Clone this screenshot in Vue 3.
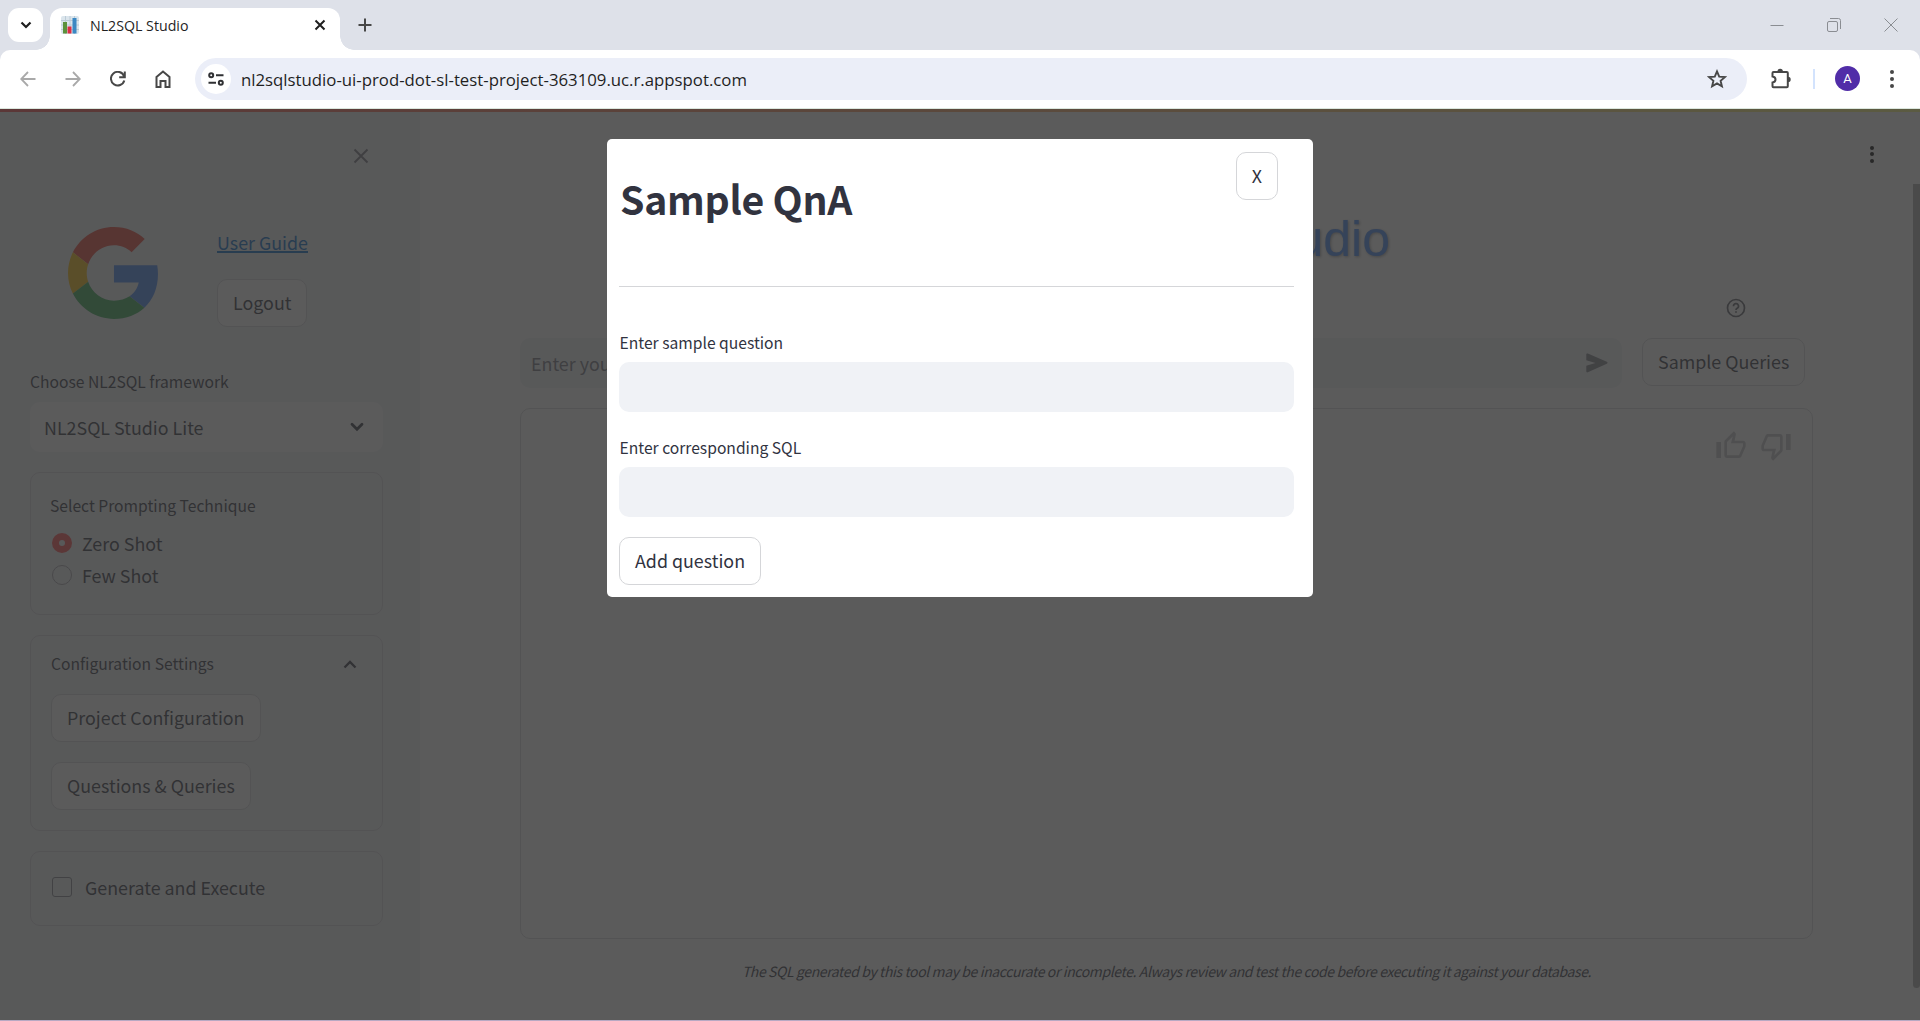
<script setup>
const menuDots = [0, 1, 2]
const configButtons = ['Project Configuration', 'Questions & Queries']
const techniques = [
  { label: 'Zero Shot', checked: true },
  { label: 'Few Shot', checked: false },
]
</script>

<template>
  <div class="window">
    <header class="tabstrip">
      <div class="tab-search">
        <svg width="12" height="8" viewBox="0 0 12 8"><path d="M1.500 1.500 6 6l4.500-4.500" fill="none" stroke="#1f1f1f" stroke-width="2.200" /></svg>
      </div>
      <div class="tab">
        <svg class="favicon" width="20" height="20" viewBox="0 0 20 20">
          <rect x="1" y="1" width="18" height="18" rx="2" fill="#dbe5ec" />
          <path d="M1 5.500h18M1 10h18M1 14.500h18M5.500 1v18M10 1v18M14.500 1v18" stroke="#bccbd6" stroke-width="1" />
          <rect x="3" y="7" width="4" height="11.500" fill="#5c913b" />
          <rect x="7.500" y="11.500" width="4" height="7" fill="#dd2e44" />
          <rect x="12.500" y="3" width="4" height="15.500" fill="#3b88c3" />
        </svg>
        <span class="tab-title">NL2SQL Studio</span>
        <svg width="12" height="12" viewBox="0 0 12 12"><path d="m1.500 1.500 9 9m0-9-9 9" stroke="#1f1f1f" stroke-width="2" /></svg>
      </div>
      <svg class="plus" width="14" height="14" viewBox="0 0 14 14"><path d="M7 .5v13M.5 7h13" stroke="#474747" stroke-width="2" /></svg>
      <div class="window-controls">
        <svg width="14" height="14" viewBox="0 0 14 14"><path d="M.5 7.500h13" stroke="#8a8d92" /></svg>
        <svg width="14" height="14" viewBox="0 0 14 14" fill="none" stroke="#8a8d92"><rect x=".5" y="3.500" width="10" height="10" rx="1.500" /><path d="M3 .5h8.500a2 2 0 0 1 2 2V11" /></svg>
        <svg width="14" height="14" viewBox="0 0 14 14"><path d="m.5.5 13 13m0-13-13 13" stroke="#8a8d92" /></svg>
      </div>
    </header>

    <nav class="toolbar">
      <svg class="nav-icon" width="16" height="16" viewBox="0 0 16 16" fill="none" stroke="#a9a9a9" stroke-width="1.800"><path d="M15.500 8H1.500M8 1 1.200 8 8 15" /></svg>
      <svg class="nav-icon" width="16" height="16" viewBox="0 0 16 16" fill="none" stroke="#a9a9a9" stroke-width="1.800"><path d="M.5 8h14M8 1l6.800 7L8 15" /></svg>
      <svg class="nav-icon" width="16" height="16" viewBox="0 0 16 16" fill="none" stroke="#474747" stroke-width="2"><path d="M14.300 9.500A6.800 6.800 0 1 1 14 5M14.800.5v5.700H9.200" /></svg>
      <svg class="nav-icon" width="16" height="18" viewBox="0 0 16 18" fill="none" stroke="#474747" stroke-width="2"><path d="M1.500 7 8 1.500 14.500 7v10H10.500v-6h-5v6h-4z" /></svg>
      <div class="omnibox">
        <div class="site-info">
          <svg width="16" height="14" viewBox="0 0 16 14" fill="none" stroke="#2f3033" stroke-width="2"><circle cx="3.200" cy="3.200" r="2" /><path d="M8 3.200h7.500M.5 10.800H8" /><circle cx="12.800" cy="10.800" r="2" /></svg>
        </div>
        <span class="url">nl2sqlstudio-ui-prod-dot-sl-test-project-363109.uc.r.appspot.com</span>
        <svg width="20" height="20" viewBox="0 0 20 20" fill="none" stroke="#474747" stroke-width="1.900"><path d="m10 2.400 2.200 5.200 5.700.5-4.300 3.700 1.300 5.500-4.900-2.900-4.900 2.900 1.300-5.500L2.100 8.100l5.700-.5z" /></svg>
      </div>
      <svg class="puzzle" width="22" height="22" viewBox="0 0 22 22"><path d="M3.500 4h13.300a1 1 0 0 1 1 1v13.300a1 1 0 0 1-1 1H3.500a1 1 0 0 1-1-1v-3.800c4-.6 4-5.400 0-6V5a1 1 0 0 1 1-1z" fill="none" stroke="#474747" stroke-width="2" /><path d="M7.500 3.500a2.700 2.700 0 0 1 5.400 0zM18 8.700a2.700 2.700 0 0 1 0 5.400z" fill="#474747" /></svg>
      <i class="toolbar-divider"></i>
      <span class="avatar">A</span>
      <span class="dots chrome-dots"><i v-for="d in menuDots" :key="d"></i></span>
    </nav>

    <main class="page">
      <aside class="sidebar">
        <svg class="collapse" width="16" height="16" viewBox="0 0 16 16"><path d="m1.500 1.500 13 13m0-13-13 13" stroke="#31333f" stroke-opacity=".65" stroke-width="1.900" /></svg>
        <div class="account">
          <svg width="90" height="92" viewBox="0 0 47 48">
            <path fill="#EA4335" d="M24 9.500c3.540 0 6.710 1.220 9.210 3.600l6.850-6.850C35.900 2.380 30.470 0 24 0 14.620 0 6.510 5.380 2.560 13.220l7.980 6.190C12.430 13.720 17.740 9.500 24 9.500z" />
            <path fill="#4285F4" d="M46.980 24.550c0-1.570-.15-3.090-.38-4.550H24v9.020h12.940c-.58 2.960-2.260 5.480-4.780 7.180l7.730 6c4.510-4.180 7.090-10.360 7.090-17.650z" />
            <path fill="#FBBC05" d="M10.530 28.590c-.48-1.450-.76-2.990-.76-4.590s.27-3.140.76-4.590l-7.980-6.190C.92 16.460 0 20.120 0 24c0 3.880.92 7.540 2.560 10.780l7.970-6.190z" />
            <path fill="#34A853" d="M24 48c6.480 0 11.930-2.130 15.890-5.810l-7.730-6c-2.150 1.450-4.920 2.300-8.160 2.300-6.260 0-11.570-4.220-13.470-9.910l-7.980 6.190C6.510 42.620 14.620 48 24 48z" />
          </svg>
          <div class="account-links">
            <a class="guide">User Guide</a>
            <button class="btn">Logout</button>
          </div>
        </div>

        <label class="label framework-label">Choose NL2SQL framework</label>
        <div class="select">
          <span>NL2SQL Studio Lite</span>
          <svg width="14" height="10" viewBox="0 0 14 10"><path d="m2 2.200 5 5 5-5" fill="none" stroke="#31333f" stroke-width="2.800" stroke-linecap="round" /></svg>
        </div>

        <section class="card technique">
          <label class="label">Select Prompting Technique</label>
          <div v-for="item in techniques" :key="item.label" class="radio">
            <i :class="{ checked: item.checked }"></i><span>{{ item.label }}</span>
          </div>
        </section>

        <section class="card config">
          <div class="config-head">
            <span class="label">Configuration Settings</span>
            <svg width="14" height="9" viewBox="0 0 14 9"><path d="m1.500 7.500 5.500-5.500 5.500 5.500" fill="none" stroke="#31333f" stroke-width="2.300" /></svg>
          </div>
          <button v-for="name in configButtons" :key="name" class="btn">{{ name }}</button>
        </section>

        <section class="card execute">
          <i class="checkbox"></i><span>Generate and Execute</span>
        </section>
      </aside>

      <section class="content">
        <h1 class="brand">NL2SQL Studio</h1>
        <svg class="help" width="20" height="20" viewBox="0 0 20 20" fill="none" stroke="#31333f" stroke-opacity=".8" stroke-width="1.700"><circle cx="10" cy="10" r="8.500" /><path d="M7.500 8.200a2.500 2.500 0 1 1 3.700 2.100c-.8.500-1.200.9-1.200 1.700M10 13.200v1.600" /></svg>
        <div class="ask">
          <div class="prompt">
            <span>Enter your question here</span>
            <svg width="22" height="20" viewBox="0 0 22 20"><path d="M.3 1.500C.3.500 1 .2 1.800.5l19 8.300c1 .4 1 1.500 0 1.900l-19 8.600c-.8.300-1.500 0-1.500-1v-5.600L9.500 10 .3 7.300z" fill="#31333f" fill-opacity=".6" /></svg>
          </div>
          <button class="btn">Sample Queries</button>
        </div>
        <div class="result">
          <svg width="32" height="32" viewBox="0 0 24 24"><path d="M9 21h9c.83 0 1.540-.5 1.840-1.220l3.020-7.050c.09-.23.140-.47.140-.73v-2c0-1.100-.9-2-2-2h-6.310l.95-4.570.03-.32c0-.41-.17-.79-.44-1.060L14.170 1 7.580 7.590C7.220 7.950 7 8.450 7 9v10c0 1.100.9 2 2 2zM9 9l4.340-4.340L12 10h9v2l-3 7H9V9zM1 9h3.500v12H1z" /></svg>
          <svg width="32" height="32" viewBox="0 0 24 24"><path d="M15 3H6c-.83 0-1.540.5-1.840 1.220l-3.020 7.050c-.09.23-.14.470-.14.730v2c0 1.100.9 2 2 2h6.310l-.95 4.570-.03.320c0 .41.170.79.440 1.060L9.830 23l6.590-6.590c.36-.36.580-.86.580-1.410V5c0-1.100-.9-2-2-2zm0 12-4.340 4.340L12 14H3v-2l3-7h9v10zm4.500-12H23v12h-3.500z" /></svg>
        </div>
        <p class="disclaimer">The SQL generated by this tool may be inaccurate or incomplete. Always review and test the code before executing it against your database.</p>
        <span class="dots page-dots"><i v-for="d in menuDots" :key="d"></i></span>
        <i class="scroll-thumb"></i>
      </section>

      <div class="overlay">
        <div class="modal">
          <header class="modal-head">
            <h2>Sample QnA</h2>
            <button class="btn close">X</button>
          </header>
          <hr />
          <label class="label">Enter sample question</label>
          <input class="field" />
          <label class="label">Enter corresponding SQL</label>
          <input class="field" />
          <button class="btn add">Add question</button>
        </div>
      </div>
    </main>
  </div>
</template>

<style>
body { margin: 0; overflow: hidden; }
</style>

<style scoped>
* { box-sizing: border-box; }
.window { width: 1920px; height: 1021px; display: flex; flex-direction: column; background: #dee1e9; border-bottom: 1px solid #b7a9c3; overflow: hidden; }
svg { display: block; flex: none; }

.tabstrip { height: 50px; flex: none; display: flex; padding: 8px 22px 0 8px; }
.tab-search { width: 35px; height: 34px; border-radius: 11px; background: #fff; display: flex; align-items: center; justify-content: center; }
.tab { position: relative; width: 290px; height: 42px; margin-left: 7px; padding: 0 14px 9px 10px; border-radius: 12px 12px 0 0; background: #fff; display: flex; align-items: center; }
.tab::before, .tab::after { content: ''; position: absolute; bottom: 0; width: 14px; height: 14px; }
.tab::before { left: -14px; background: radial-gradient(circle at 0 0, transparent 13.500px, #fff 14px); }
.tab::after { right: -14px; background: radial-gradient(circle at 100% 0, transparent 13.500px, #fff 14px); }
.tab-title { flex: 1; margin-left: 10px; padding-top: 1px; font: 14.200px 'Open Sans', sans-serif; color: #1f1f1f; white-space: nowrap; }
.plus { margin: 10px 0 0 18px; }
.window-controls { margin-left: auto; height: 33px; display: flex; align-items: center; gap: 43px; }

.toolbar { height: 59px; flex: none; display: flex; align-items: center; padding: 0 22px 1px 20px; background: #fff; border-radius: 10px 10px 0 0; border-bottom: 1px solid #dbe6dd; }
.nav-icon { margin-right: 29px; }
.nav-icon:nth-child(4) { margin-right: 24px; }
.omnibox { width: 1552px; height: 42px; border-radius: 21px; background: #ebeef8; display: flex; align-items: center; padding: 0 20px 0 6px; }
.site-info { width: 30px; height: 30px; border-radius: 50%; background: #fff; display: flex; align-items: center; justify-content: center; }
.url { flex: 1; margin-left: 10px; padding-top: 1px; font: 16.780px 'Open Sans', sans-serif; color: #1f1f1f; white-space: nowrap; }
.puzzle { margin-left: 23px; }
.toolbar-divider { width: 2px; height: 20px; margin-left: 21px; background: #d3e3fd; }
.avatar { width: 25px; height: 25px; margin-left: 20px; border-radius: 50%; background: #512da8; color: #fff; font: 13px/25px Roboto, sans-serif; text-align: center; }
.dots { display: flex; flex-direction: column; }
.dots i { width: 4px; height: 4px; border-radius: 50%; }
.chrome-dots { margin-left: auto; gap: 3px; margin-right: 4px; }
.chrome-dots i { background: #474747; }

.page { position: relative; flex: 1; display: flex; background: #fff; font: 17.850px/26px 'Noto Sans CJK JP', 'Noto Sans CJK SC', sans-serif; color: #31333f; white-space: nowrap; }
.page::before { content: ''; position: absolute; inset: 0 0 auto; height: 3px; background: linear-gradient(90deg, #ff4b4b, #fffd80); }
.sidebar { width: 420px; flex: none; background: #f0f2f6; padding: 39px 37px 0 30px; display: flex; flex-direction: column; }
.collapse { margin-left: 323px; }
.account { display: flex; margin: 63px 0 0 38px; }
.account-links { margin-left: 59px; display: flex; flex-direction: column; align-items: flex-start; }
.guide { color: #0068c9; border-bottom: 2px solid; line-height: 30px; height: 26px; }
.btn { height: 48px; padding: 0 15px 2px; border: 1px solid #d5d6d9; border-radius: 10px; background: #fff; color: inherit; font: inherit; }
.account-links .btn { margin-top: 26px; }
.label { display: block; font-size: 15.650px; line-height: 24px; }
.framework-label { margin-top: 43px; }
.select { height: 50px; margin-top: 8px; padding: 0 19px 0 14px; border-radius: 10px; background: #fff; display: flex; align-items: center; justify-content: space-between; }
.card { border: 1px solid #d5d6d9; border-radius: 10px; margin-top: 20px; padding: 0 20px; }
.technique { height: 143px; padding: 21px 19px 0; }
.technique .label { margin-bottom: 9px; }
.radio { display: flex; align-items: center; height: 32px; padding-left: 2px; }
.radio i { width: 20px; height: 20px; margin-right: 10px; border: 1px solid #a3a4aa; border-radius: 50%; }
.radio i.checked { border: 7px solid #ff4b4b; }
.config { height: 196px; padding-top: 16px; display: flex; flex-direction: column; align-items: flex-start; }
.config-head { width: 100%; padding-right: 5px; display: flex; align-items: center; justify-content: space-between; margin-bottom: 18px; }
.config .btn + .btn { margin-top: 20px; }
.execute { height: 75px; display: flex; align-items: center; padding: 0 20px 4px 21px; }
.checkbox { width: 20px; height: 20px; margin-right: 13px; border: 1px solid #80828a; border-radius: 3px; }

.content { flex: 1; position: relative; padding: 0 107px 0 100px; display: flex; flex-direction: column; }
.brand { align-self: flex-end; margin: 101px 423px 0 0; font: 50px/58px 'Liberation Sans', Arial, sans-serif; color: #4285f4; text-shadow: 1px 1px 3px rgba(0, 0, 0, .4); }
.help { margin: 30px 67px 0 auto; }
.ask { display: flex; align-items: flex-start; margin-top: 20px; }
.prompt { width: 1102px; height: 50px; margin-right: 20px; border-radius: 10px; background: #f0f2f6; display: flex; align-items: center; justify-content: space-between; padding: 0 14px 0 11px; color: #73757f; }
.result { height: 531px; margin-top: 20px; border: 1px solid #d5d6d9; border-radius: 10px; display: flex; justify-content: flex-end; gap: 13px; padding: 21px 20px 0 0; fill: #31333f; fill-opacity: .3; }
.disclaimer { margin: 19px 0 0; text-align: center; font-size: 14px; letter-spacing: -.39px; font-style: italic; }
.page-dots { position: absolute; right: 46px; top: 37px; gap: 2.300px; }
.page-dots i { background: #000; }
.scroll-thumb { position: absolute; right: 0; top: 75px; width: 7px; height: 804px; background: #a9a9a9; border-radius: 0 0 4px 4px; }

.overlay { position: absolute; inset: 0; background: rgba(50, 50, 50, .8); }
.modal { position: absolute; left: 607px; top: 30px; width: 706px; height: 458px; padding: 13px 19px 12px 12px; border-radius: 5px; background: #fff; }
.modal-head { display: flex; justify-content: space-between; }
h2 { margin: 19px 0 0 1px; font-size: 39.200px; line-height: 54px; font-weight: 600; letter-spacing: -.3px; }
.close { margin-right: 16px; }
hr { margin: 61px 0 0; border: 0; border-top: 1px solid #d5d6d9; }
.modal .label { margin: 0 0 7px .5px; }
.modal hr + .label { margin-top: 44px; }
.field { display: block; width: 675px; height: 50px; border: 0; border-radius: 10px; background: #f0f2f6; }
.modal .field + .label { margin-top: 24px; }
.add { margin-top: 20px; }
</style>
